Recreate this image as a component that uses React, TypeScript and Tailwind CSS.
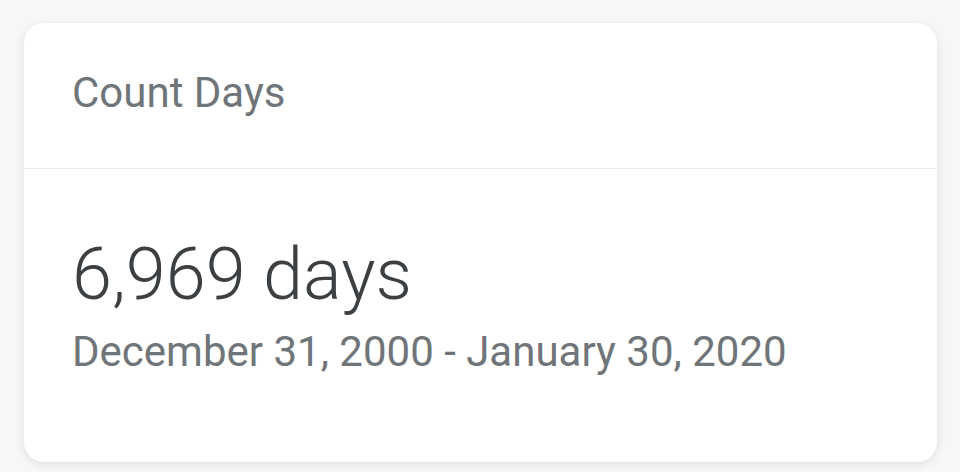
export default function App() {
  return (
    <div
      className="flex h-[472px] w-[960px] flex-col bg-[#f7f7f8] pl-6 pr-[23px] pt-[23px] pb-[10px]"
      style={{ fontFamily: 'Roboto, "Noto Sans", sans-serif' }}
    >
      <div className="flex flex-1 flex-col overflow-hidden rounded-[20px] bg-white shadow-[0_2px_10px_rgba(0,0,0,0.1)]">
        {/* header */}
        <div className="h-[146px] shrink-0 border-b border-[#e8eaed] pl-[48px] pt-[49px]">
          <p className="text-[42px] leading-none text-[#70757a]">Count Days</p>
        </div>

        {/* result */}
        <div className="flex-1 pl-[48px] pt-[70px]">
          <p className="text-[72px] font-light leading-none text-[#3c4043]">6,969 days</p>
          <p className="mt-[20px] text-[42px] leading-none text-[#70757a]">
            December 31, 2000 - January 30, 2020
          </p>
        </div>
      </div>
    </div>
  );
}
